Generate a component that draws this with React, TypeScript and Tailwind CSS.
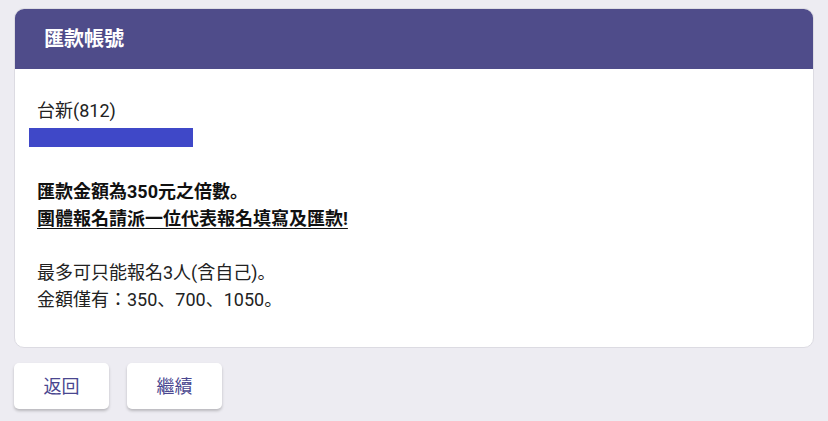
const FONT = "font-['Roboto','Noto_Sans_CJK_JP',sans-serif]";

export default function App() {
  return (
    <div className={`min-h-[421px] w-[828px] bg-[#edecf2] px-[14px] pt-2 ${FONT}`}>
      <div className="overflow-hidden rounded-[10px] border border-[#dcdbe2] bg-white">
        <div className="flex h-[60px] items-center bg-[#4f4c8a] px-[29px]">
          <h1 className="text-[20px] font-bold text-white">匯款帳號</h1>
        </div>
        <div className="px-[14px] pb-[34px] pt-[28px] text-[18px] leading-[27px] text-[#222]">
          <p className="pl-2">台新(812)</p>
          <div className="mt-[4px] h-[19px] w-[164px] bg-[#3f48c8]" />
          <div className="mt-[31px] pl-2">
            <p className="font-bold text-[#111]">匯款金額為350元之倍數。</p>
            <p className="font-bold text-[#111] underline underline-offset-[3px]">
              團體報名請派一位代表報名填寫及匯款!
            </p>
            <p>&nbsp;</p>
            <p>最多可只能報名3人(含自己)。</p>
            <p>金額僅有：350、700、1050。</p>
          </div>
        </div>
      </div>
      <div className="mt-[15px] flex gap-[18px]">
        <button className="h-[46px] w-[95px] rounded-[5px] bg-white text-[18px] text-[#4a4790] shadow-[0_2px_3px_rgba(0,0,0,0.22)]">
          返回
        </button>
        <button className="h-[46px] w-[95px] rounded-[5px] bg-white text-[18px] text-[#4a4790] shadow-[0_2px_3px_rgba(0,0,0,0.22)]">
          繼續
        </button>
      </div>
    </div>
  );
}
